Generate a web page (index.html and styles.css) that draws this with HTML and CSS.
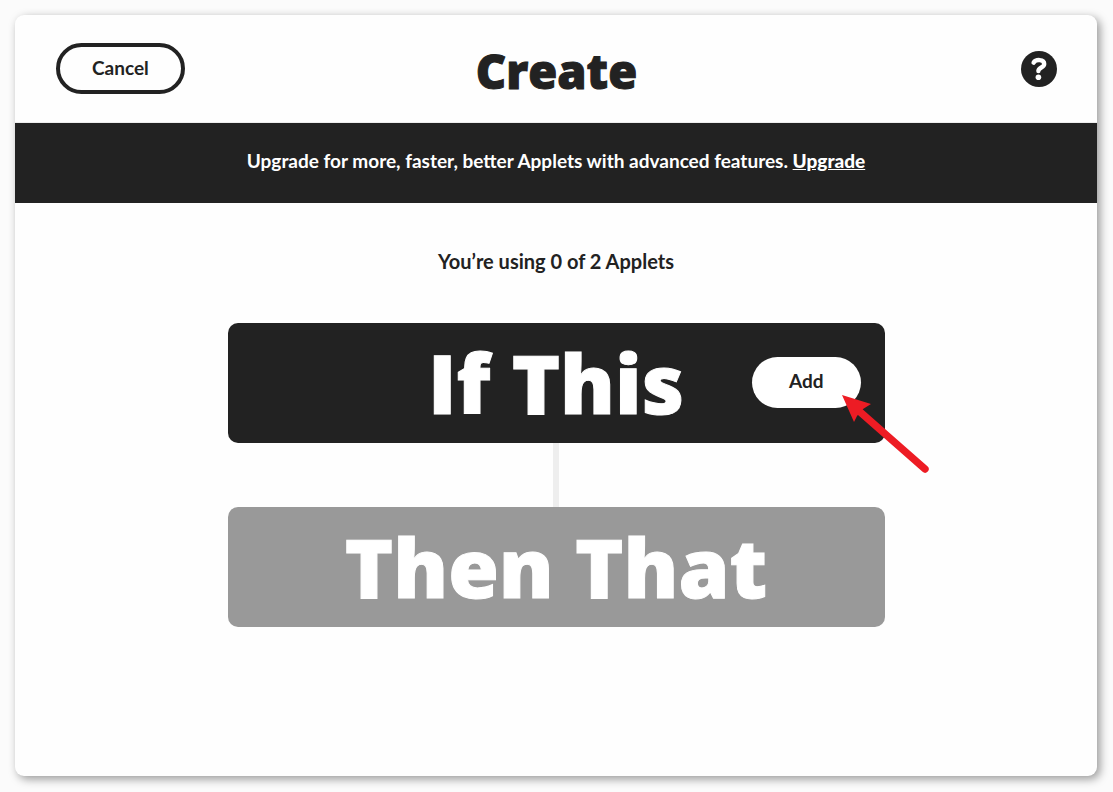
FILE: index.html
```html
<!DOCTYPE html>
<html lang="en">
<head>
<meta charset="utf-8">
<meta name="viewport" content="width=device-width, initial-scale=1">
<title>Create</title>
<link rel="stylesheet" href="styles.css">
</head>
<body>
<div class="window">
  <header class="header">
    <div class="header-side"><button class="button button-outline" type="button">Cancel</button></div>
    <h1 class="title">Create</h1>
    <div class="header-side header-end">
      <button class="help" type="button" aria-label="Help">
        <svg viewBox="0 0 36 36" width="36" height="36" aria-hidden="true">
          <circle cx="18" cy="18" r="18" fill="#222"/>
          <path d="M12.6 11.6C14.6 8.2 23.2 7.8 23.2 13C23.2 16.8 17.4 16.2 17.4 20" fill="none" stroke="#fff" stroke-width="4.4" stroke-linecap="round" stroke-linejoin="round"/>
          <circle cx="17.4" cy="26.2" r="2.8" fill="#fff"/>
        </svg>
      </button>
    </div>
  </header>
  <div class="banner"><p class="banner-text">Upgrade for more, faster, better Applets with advanced features. <a class="banner-link" href="#upgrade">Upgrade</a></p></div>
  <main class="content">
    <p class="usage">You’re using 0 of 2 Applets</p>
    <div class="steps">
      <section class="step">
        <h2 class="step-title">If This</h2>
        <button class="button button-add" type="button">Add</button>
        <svg class="pointer" viewBox="0 0 88 78" width="88" height="78" aria-hidden="true">
          <path d="M17 16L83 74" stroke="#ed1c24" stroke-width="7.4" stroke-linecap="round"/>
          <path d="M0 0L29 9L21 14L15 21L12 27Z" fill="#ed1c24"/>
        </svg>
      </section>
      <div class="connector"></div>
      <section class="step step-disabled">
        <h2 class="step-title">Then That</h2>
      </section>
    </div>
  </main>
</div>
</body>
</html>
```
FILE: styles.css
```css
* {
  box-sizing: border-box;
}

body {
  margin: 0;
  padding: 15px 16px 16px 15px;
  min-height: 100vh;
  display: flex;
  background: #fbfbfb;
  color: #222;
  font-family: "Avenir Next", Lato, sans-serif;
  font-size: 19px;
  font-weight: 700;
}

h1, h2, p {
  margin: 0;
}

.window {
  flex: 1;
  min-width: 0;
  background: #fefefe;
  border-radius: 9px;
  box-shadow: 3px 3px 10px rgba(0, 0, 0, 0.4);
}

.header {
  display: grid;
  grid-template-columns: 1fr auto 1fr;
  align-items: center;
  height: 108px;
  padding: 0 40px 0 41px;
  border-bottom: 1px solid #eee;
}

.header-end {
  display: flex;
  justify-content: flex-end;
}

.title,
.step-title {
  font-family: "Avenir Next", "Open Sans", sans-serif;
  font-weight: 800;
  -webkit-text-stroke: 1px currentColor;
}

.title {
  padding-top: 4px;
  font-size: 47px;
  line-height: 60px;
}

.button {
  height: 51px;
  padding-top: 0;
  padding-bottom: 3px;
  border-radius: 26px;
  font: inherit;
  color: #222;
  cursor: pointer;
}

.button-outline {
  padding-left: 32px;
  padding-right: 32px;
  border: 4px solid #222;
  background: #fefefe;
}

.button-add {
  justify-self: end;
  padding-left: 37px;
  padding-right: 37px;
  border: 0;
  background: #fff;
}

.help {
  display: block;
  width: 36px;
  height: 36px;
  padding: 0;
  border: 0;
  border-radius: 50%;
  background: none;
  cursor: pointer;
}

.help svg {
  display: block;
}

.banner {
  padding: 24px 16px 28px;
  background: #222;
  color: #fff;
  text-align: center;
  line-height: 28px;
}

.banner-link {
  color: inherit;
  font-weight: 900;
}

.content {
  padding: 44px 16px;
}

.usage {
  text-align: center;
  font-size: 20px;
  line-height: 28px;
}

.steps {
  max-width: 657px;
  margin: 48px auto 0;
}

.step {
  position: relative;
  display: grid;
  grid-template-columns: 1fr auto 1fr;
  align-items: center;
  min-height: 120px;
  padding: 0 24px 2px;
  border-radius: 10px;
  background: #222;
  color: #fff;
}

.step-disabled {
  background: #999;
}

.step-title {
  grid-column: 2;
  font-size: 82px;
  line-height: 116px;
}

.connector {
  width: 6px;
  height: 64px;
  margin: 0 auto;
  background: #eee;
}

.pointer {
  position: absolute;
  top: 72px;
  right: -45px;
  pointer-events: none;
}
```
